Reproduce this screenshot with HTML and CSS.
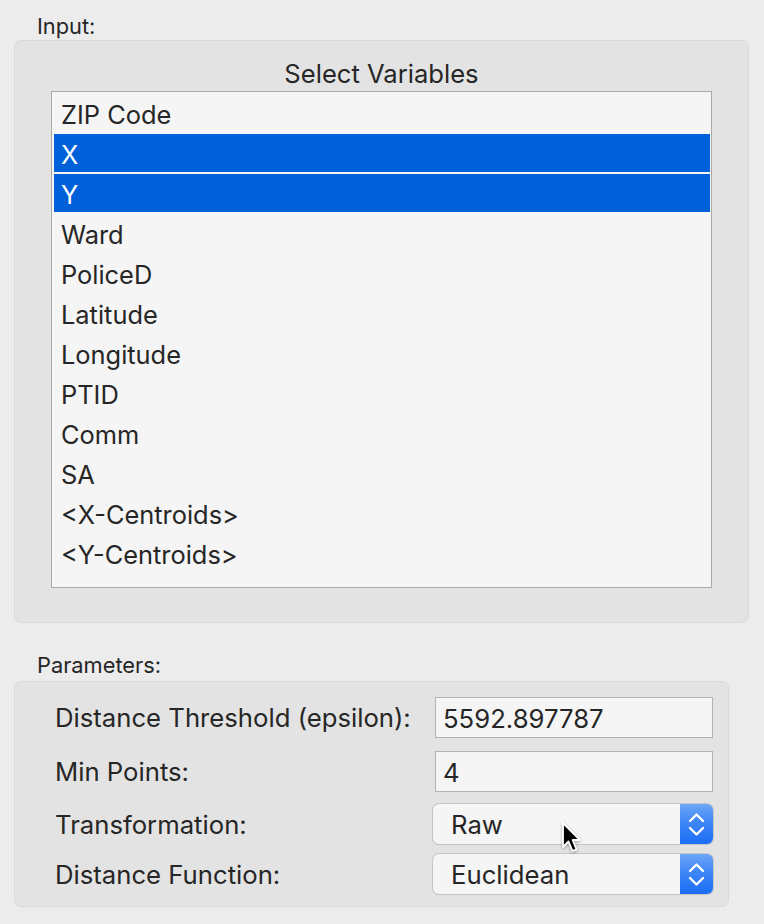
FILE: index.html
```html
<!DOCTYPE html>
<html>
<head>
<meta charset="utf-8">
<link rel="stylesheet" href="styles.css">
</head>
<body>
<div class="window">
  <div class="section-label input-label">Input:</div>
  <div class="group input-group">
    <div class="group-title">Select Variables</div>
    <div class="listbox">
      <div class="row">ZIP Code</div>
      <div class="row selected">X</div>
      <div class="row selected">Y</div>
      <div class="row">Ward</div>
      <div class="row">PoliceD</div>
      <div class="row">Latitude</div>
      <div class="row">Longitude</div>
      <div class="row">PTID</div>
      <div class="row">Comm</div>
      <div class="row">SA</div>
      <div class="row">&lt;X-Centroids&gt;</div>
      <div class="row">&lt;Y-Centroids&gt;</div>
    </div>
  </div>

  <div class="section-label params-label">Parameters:</div>
  <div class="group params-group">
    <div class="param-row r1">
      <div class="param-label">Distance Threshold (epsilon):</div>
      <div class="textfield">5592.897787</div>
    </div>
    <div class="param-row r2">
      <div class="param-label">Min Points:</div>
      <div class="textfield">4</div>
    </div>
    <div class="param-row r3">
      <div class="param-label">Transformation:</div>
      <div class="popup">
        <span class="popup-text">Raw</span>
        <span class="popup-arrows">
          <svg width="33" height="40" viewBox="0 0 33 40">
            <path d="M10 17 L16.5 10.5 L23 17" fill="none" stroke="#fff" stroke-width="2.4" stroke-linecap="round" stroke-linejoin="round"/>
            <path d="M10 24 L16.5 30.5 L23 24" fill="none" stroke="#fff" stroke-width="2.4" stroke-linecap="round" stroke-linejoin="round"/>
          </svg>
        </span>
      </div>
    </div>
    <div class="param-row r4">
      <div class="param-label">Distance Function:</div>
      <div class="popup">
        <span class="popup-text">Euclidean</span>
        <span class="popup-arrows">
          <svg width="33" height="40" viewBox="0 0 33 40">
            <path d="M10 17 L16.5 10.5 L23 17" fill="none" stroke="#fff" stroke-width="2.4" stroke-linecap="round" stroke-linejoin="round"/>
            <path d="M10 24 L16.5 30.5 L23 24" fill="none" stroke="#fff" stroke-width="2.4" stroke-linecap="round" stroke-linejoin="round"/>
          </svg>
        </span>
      </div>
    </div>
  </div>

  <svg class="cursor" width="26" height="36" viewBox="0 0 26 36">
    <path d="M2 2 L2 26 L7.5 20.5 L11.5 30 L15.5 28.3 L11.6 19 L19 19 Z" fill="#000" stroke="#fff" stroke-width="1.8" stroke-linejoin="round"/>
  </svg>
</div>
</body>
</html>
```

FILE: styles.css
```css
html, body {
  margin: 0;
  padding: 0;
  background: #ececec;
}

body {
  font-family: "Inter", "Liberation Sans", sans-serif;
  color: #262626;
  width: 764px;
  height: 924px;
  overflow: hidden;
}

.window {
  position: relative;
  width: 764px;
  height: 924px;
}

.section-label {
  font-size: 21.8px;
  line-height: 20px;
  height: 20px;
  padding-left: 37px;
  color: #262626;
}

.input-label {
  padding-top: 16px;
  margin-bottom: 4px;
}

.group {
  box-sizing: border-box;
  margin-left: 14px;
  background: #e3e3e3;
  border: 1px solid #d9d9d9;
  border-radius: 7px;
}

.input-group {
  width: 735px;
  height: 583px;
  padding-top: 18px;
}

.group-title {
  text-align: center;
  font-size: 25.6px;
  line-height: 30px;
  height: 30px;
  margin-bottom: 2px;
}

.listbox {
  box-sizing: border-box;
  margin: 0 36px;
  height: 497px;
  border: 1px solid #a9a9a9;
  background: #f5f5f5;
  padding: 2px 1px 2px 2px;
}

.row {
  height: 38px;
  margin-bottom: 2px;
  line-height: 42px;
  padding-left: 7px;
  font-size: 25.4px;
  white-space: nowrap;
}

.row.selected {
  background: #0060d9;
  color: #fff;
}

.params-label {
  margin-top: 32px;
  margin-bottom: 6px;
}

.params-group {
  width: 715px;
  height: 226px;
  padding: 15px 15px 0 40px;
}

.param-row {
  display: grid;
  grid-template-columns: 378px 280px;
  align-items: center;
  font-size: 25.7px;
}

.r1, .r2 { height: 41px; }
.r3, .r4 { height: 40px; }
.r2 { margin-top: 13px; }
.r3 { margin-top: 12px; }
.r4 { margin-top: 10px; }

.param-label {
  line-height: 30px;
  padding-top: 1px;
  white-space: nowrap;
}

.textfield {
  box-sizing: border-box;
  margin-left: 2px;
  height: 41px;
  border: 1px solid #b3b3b3;
  background: #f5f5f5;
  line-height: 41px;
  padding-left: 7px;
  white-space: nowrap;
}

.popup {
  box-sizing: border-box;
  position: relative;
  height: 40px;
  display: flex;
  align-items: stretch;
  background: #f5f5f5;
  border-radius: 6px;
  box-shadow: 0 0 0 1px #c6c6c6, 0 1px 1px rgba(0,0,0,0.12);
  overflow: hidden;
}

.popup-text {
  flex: 1;
  line-height: 42px;
  padding-left: 18px;
}

.popup-arrows {
  width: 33px;
  height: 40px;
  display: block;
  background: linear-gradient(to bottom, #6ca7f7 0%, #3f86f6 45%, #1a6ef6 100%);
}

.popup-arrows svg {
  display: block;
}

.cursor {
  position: absolute;
  left: 561px;
  top: 821px;
  filter: drop-shadow(0 1px 1.5px rgba(0,0,0,0.35));
}
```
